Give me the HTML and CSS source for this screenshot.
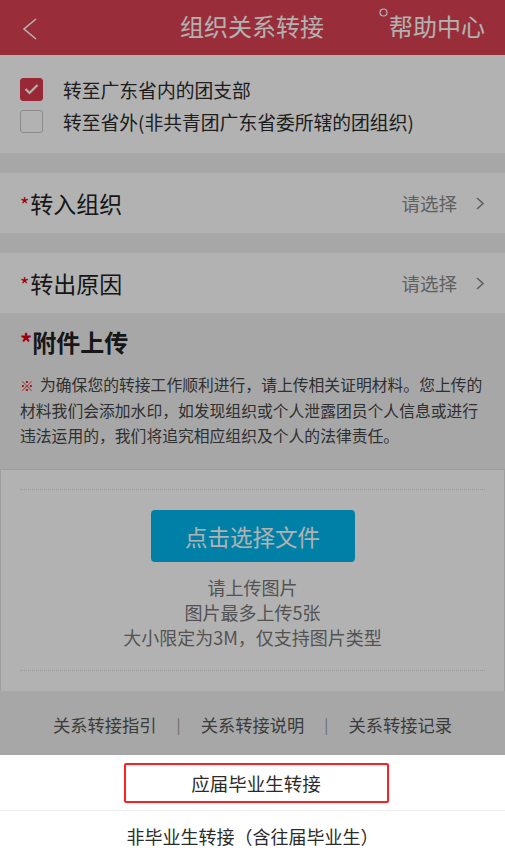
FILE: index.html
```html
<!DOCTYPE html>
<html lang="zh-CN">
<head>
    <meta charset="UTF-8">
    <meta name="viewport" content="width=device-width, initial-scale=1.0">
    <title>组织关系转接</title>
    <link rel="stylesheet" href="styles.css">
</head>
<body>

    <div class="header">
        <span class="back">
            <svg width="16" height="24" viewBox="0 0 16 24"><polyline points="14,2 2,12 14,22" fill="none" stroke="#fff" stroke-width="1.6"/></svg>
        </span>
        <span class="title">组织关系转接</span>
        <span class="help">
            <svg class="help-dot" width="9" height="9" viewBox="0 0 9 9"><circle cx="4.5" cy="4.5" r="3.5" fill="none" stroke="#fff" stroke-width="1.2"/></svg>帮助中心
        </span>
    </div>

    <div class="checks">
        <div class="check-row">
            <span class="box checked">
                <svg width="15" height="12" viewBox="0 0 15 12"><polyline points="1.5,6 5.5,10 13.5,2" fill="none" stroke="#fff" stroke-width="2.2"/></svg>
            </span>
            <span>转至广东省内的团支部</span>
        </div>
        <div class="check-row">
            <span class="box"></span>
            <span>转至省外(非共青团广东省委所辖的团组织)</span>
        </div>
    </div>

    <div class="field">
        <span class="label"><em>*</em>转入组织</span>
        <span class="pick">请选择
            <svg width="10" height="15" viewBox="0 0 10 15"><polyline points="2,2 8,7.5 2,13" fill="none" stroke="#888" stroke-width="1.6"/></svg>
        </span>
    </div>

    <div class="field">
        <span class="label"><em>*</em>转出原因</span>
        <span class="pick">请选择
            <svg width="10" height="15" viewBox="0 0 10 15"><polyline points="2,2 8,7.5 2,13" fill="none" stroke="#888" stroke-width="1.6"/></svg>
        </span>
    </div>

    <div class="attach">
        <h3><em>*</em>附件上传</h3>
        <p class="notice"><em class="mark">※</em>为确保您的转接工作顺利进行，请上传相关证明材料。您上传的<br>材料我们会添加水印，如发现组织或个人泄露团员个人信息或进行<br>违法运用的，我们将追究相应组织及个人的法律责任。</p>
    </div>

    <div class="upload">
        <div class="upload-inner">
            <button class="btn-file">点击选择文件</button>
            <div class="hints">
                <div>请上传图片</div>
                <div>图片最多上传5张</div>
                <div>大小限定为3M，仅支持图片类型</div>
            </div>
        </div>
    </div>

    <div class="links">
        <span>关系转接指引</span>
        <span class="sep">|</span>
        <span>关系转接说明</span>
        <span class="sep">|</span>
        <span>关系转接记录</span>
    </div>

    <div class="mask"></div>

    <div class="sheet">
        <div class="sheet-item"><span class="marked">应届毕业生转接</span></div>
        <div class="sheet-item">非毕业生转接（含往届毕业生）</div>
    </div>

</body>
</html>
```

FILE: styles.css
```css
body {
    margin: 0;
    font-family: "Noto Sans CJK SC", "Noto Sans", sans-serif;
    background: #f0f0f0;
    color: #2b2b2b;
    width: 505px;
    overflow: hidden;
}
em {
    font-style: normal;
    color: #e60012;
}
.header {
    height: 55px;
    background: #dc4354;
    color: #fff;
    display: flex;
    align-items: center;
    justify-content: space-between;
    padding: 0 20px 0 22px;
}
.back {
    width: 60px;
    display: flex;
    align-items: center;
    padding-top: 2px;
}
.title {
    font-size: 24px;
    margin-left: 43px;
    margin-top: -4px;
}
.help {
    font-size: 24px;
    display: flex;
    align-items: center;
    margin-top: -4px;
}
.help-dot {
    align-self: flex-start;
    margin-right: 1px;
}
.checks {
    background: #fff;
    padding: 18px 20px 16px;
}
.check-row {
    height: 32px;
    display: flex;
    align-items: center;
    font-size: 18.8px;
    color: #2b2b2b;
}
.box {
    width: 21px;
    height: 21px;
    border: 1px solid #c8c8c8;
    border-radius: 3px;
    margin-right: 20px;
    display: flex;
    align-items: center;
    justify-content: center;
    background: #fff;
}
.box.checked {
    background: #dc3a50;
    border-color: #dc3a50;
}
.field {
    height: 60px;
    margin-top: 20px;
    background: #fff;
    display: flex;
    align-items: center;
    justify-content: space-between;
    padding: 0 20px;
}
.label {
    font-size: 23px;
    color: #222;
}
.label em {
    font-size: 20px;
    margin-right: 1px;
}
.pick {
    font-size: 18.5px;
    color: #8a8a8a;
    display: flex;
    align-items: center;
    gap: 18px;
}
.attach {
    padding: 14px 0 21px 20px;
}
.attach h3 {
    margin: 0;
    font-size: 24px;
    line-height: 30px;
    font-weight: bold;
    color: #222;
}
.notice {
    margin: 15px 0 0;
    font-size: 15.8px;
    line-height: 25px;
    color: #444;
    white-space: nowrap;
}
.mark {
    display: inline-block;
    width: 20px;
    font-size: 14px;
}
.upload {
    background: #fff;
    border: 1px solid #e2e2e2;
    border-bottom: none;
    padding: 19px 19px 20px;
}
.upload-inner {
    border-top: 1px dotted #ddd;
    border-bottom: 1px dotted #ddd;
    padding: 20px 0 20px;
    text-align: center;
}
button {
    border: none;
    cursor: pointer;
    font-family: inherit;
}
.btn-file {
    width: 204px;
    height: 52px;
    background: #00b8f0;
    color: #fff;
    font-size: 22.5px;
    border-radius: 4px;
}
.hints {
    margin-top: 13px;
    font-size: 18px;
    line-height: 25px;
    color: #777;
}
.links {
    height: 65px;
    display: flex;
    align-items: center;
    justify-content: center;
    gap: 20px;
    font-size: 17.3px;
    color: #555;
    padding-top: 2px;
    box-sizing: border-box;
}
.sep {
    color: #999;
    font-size: 15px;
}
.mask {
    position: fixed;
    left: 0;
    top: 0;
    right: 0;
    bottom: 0;
    background: rgba(0, 0, 0, 0.3);
}
.sheet {
    position: fixed;
    left: 0;
    right: 0;
    top: 755px;
    bottom: 0;
    background: #fff;
}
.sheet-item {
    height: 55px;
    display: flex;
    align-items: center;
    justify-content: center;
    font-size: 18.5px;
    color: #2b2b2b;
    border-bottom: 1px solid #eee;
}
.sheet-item + .sheet-item {
    height: 50px;
    font-size: 18px;
    border-bottom: none;
}
.marked {
    width: 261px;
    height: 36px;
    margin-left: 7px;
    border: 2px solid #ff2020;
    border-radius: 2px;
    display: flex;
    align-items: center;
    justify-content: center;
}
```
